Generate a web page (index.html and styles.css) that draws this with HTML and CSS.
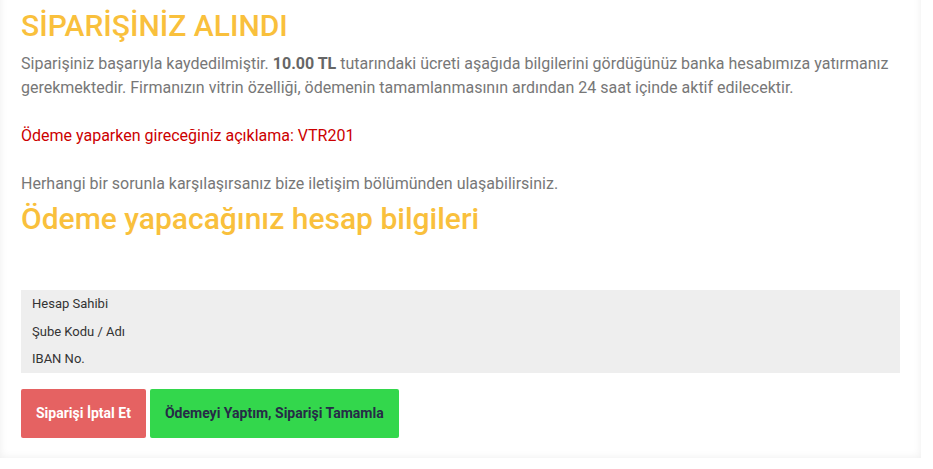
FILE: index.html
```html
<!DOCTYPE html>
<html lang="tr">

<head>
    <meta charset="UTF-8">
    <meta name="viewport" content="width=device-width, initial-scale=1.0">
    <title>Sipariş Alındı</title>
    <link rel="stylesheet" href="styles.css">
</head>

<body>

    <div class="order-box">
        <h1 class="title">SİPARİŞİNİZ ALINDI</h1>
        <p class="info">
            Siparişiniz başarıyla kaydedilmiştir. <b>10.00 TL</b> tutarındaki ücreti aşağıda bilgilerini gördüğünüz banka hesabımıza yatırmanız gerekmektedir. Firmanızın vitrin özelliği, ödemenin tamamlanmasının ardından 24 saat içinde aktif edilecektir.
            <br><br>
            <span class="code">Ödeme yaparken gireceğiniz açıklama: VTR201</span>
            <br><br>
            Herhangi bir sorunla karşılaşırsanız bize iletişim bölümünden ulaşabilirsiniz.
        </p>

        <h2 class="title sub">Ödeme yapacağınız hesap bilgileri</h2>

        <table class="bank-table">
            <tr><td>Hesap Sahibi</td></tr>
            <tr><td>Şube Kodu / Adı</td></tr>
            <tr><td>IBAN No.</td></tr>
        </table>

        <div class="actions">
            <a href="#" class="btn btn-cancel">Siparişi İptal Et</a>
            <a href="#" class="btn btn-done">Ödemeyi Yaptım, Siparişi Tamamla</a>
        </div>
    </div>

</body>

</html>
```

FILE: styles.css
```css
body {
    font-family: 'Roboto', 'Liberation Sans', sans-serif;
    margin: 0;
    padding: 0;
    background-color: #fff;
}

.order-box {
    width: 921px;
    box-sizing: border-box;
    margin-top: -20px;
    padding: 29px 21px 20px 21px;
    background-color: #fff;
    box-shadow: inset 0 0 9px rgba(0, 0, 0, 0.07);
}

.title {
    margin: 0;
    font-size: 30px;
    line-height: 33px;
    font-weight: 500;
    color: #f9c03c;
}

.info {
    margin: 10px 0 6px 0;
    font-size: 16px;
    line-height: 24px;
    color: #777;
}

.info b {
    color: #666;
}

.code {
    color: #cc0000;
}

.sub {
    margin-bottom: 55px;
}

.bank-table {
    width: 100%;
    border-collapse: collapse;
    background-color: #eee;
}

.bank-table td {
    padding: 5px 11px;
    font-size: 13px;
    line-height: 17.67px;
    color: #333;
}

.actions {
    margin-top: 16px;
    display: flex;
    gap: 4px;
}

.btn {
    display: block;
    padding: 0 15px;
    height: 49px;
    line-height: 49px;
    font-size: 14px;
    font-weight: bold;
    text-decoration: none;
    border-radius: 2px;
}

.btn-cancel {
    background-color: #e56262;
    color: #fff;
}

.btn-done {
    background-color: #33d74c;
    color: #262b47;
}
```
